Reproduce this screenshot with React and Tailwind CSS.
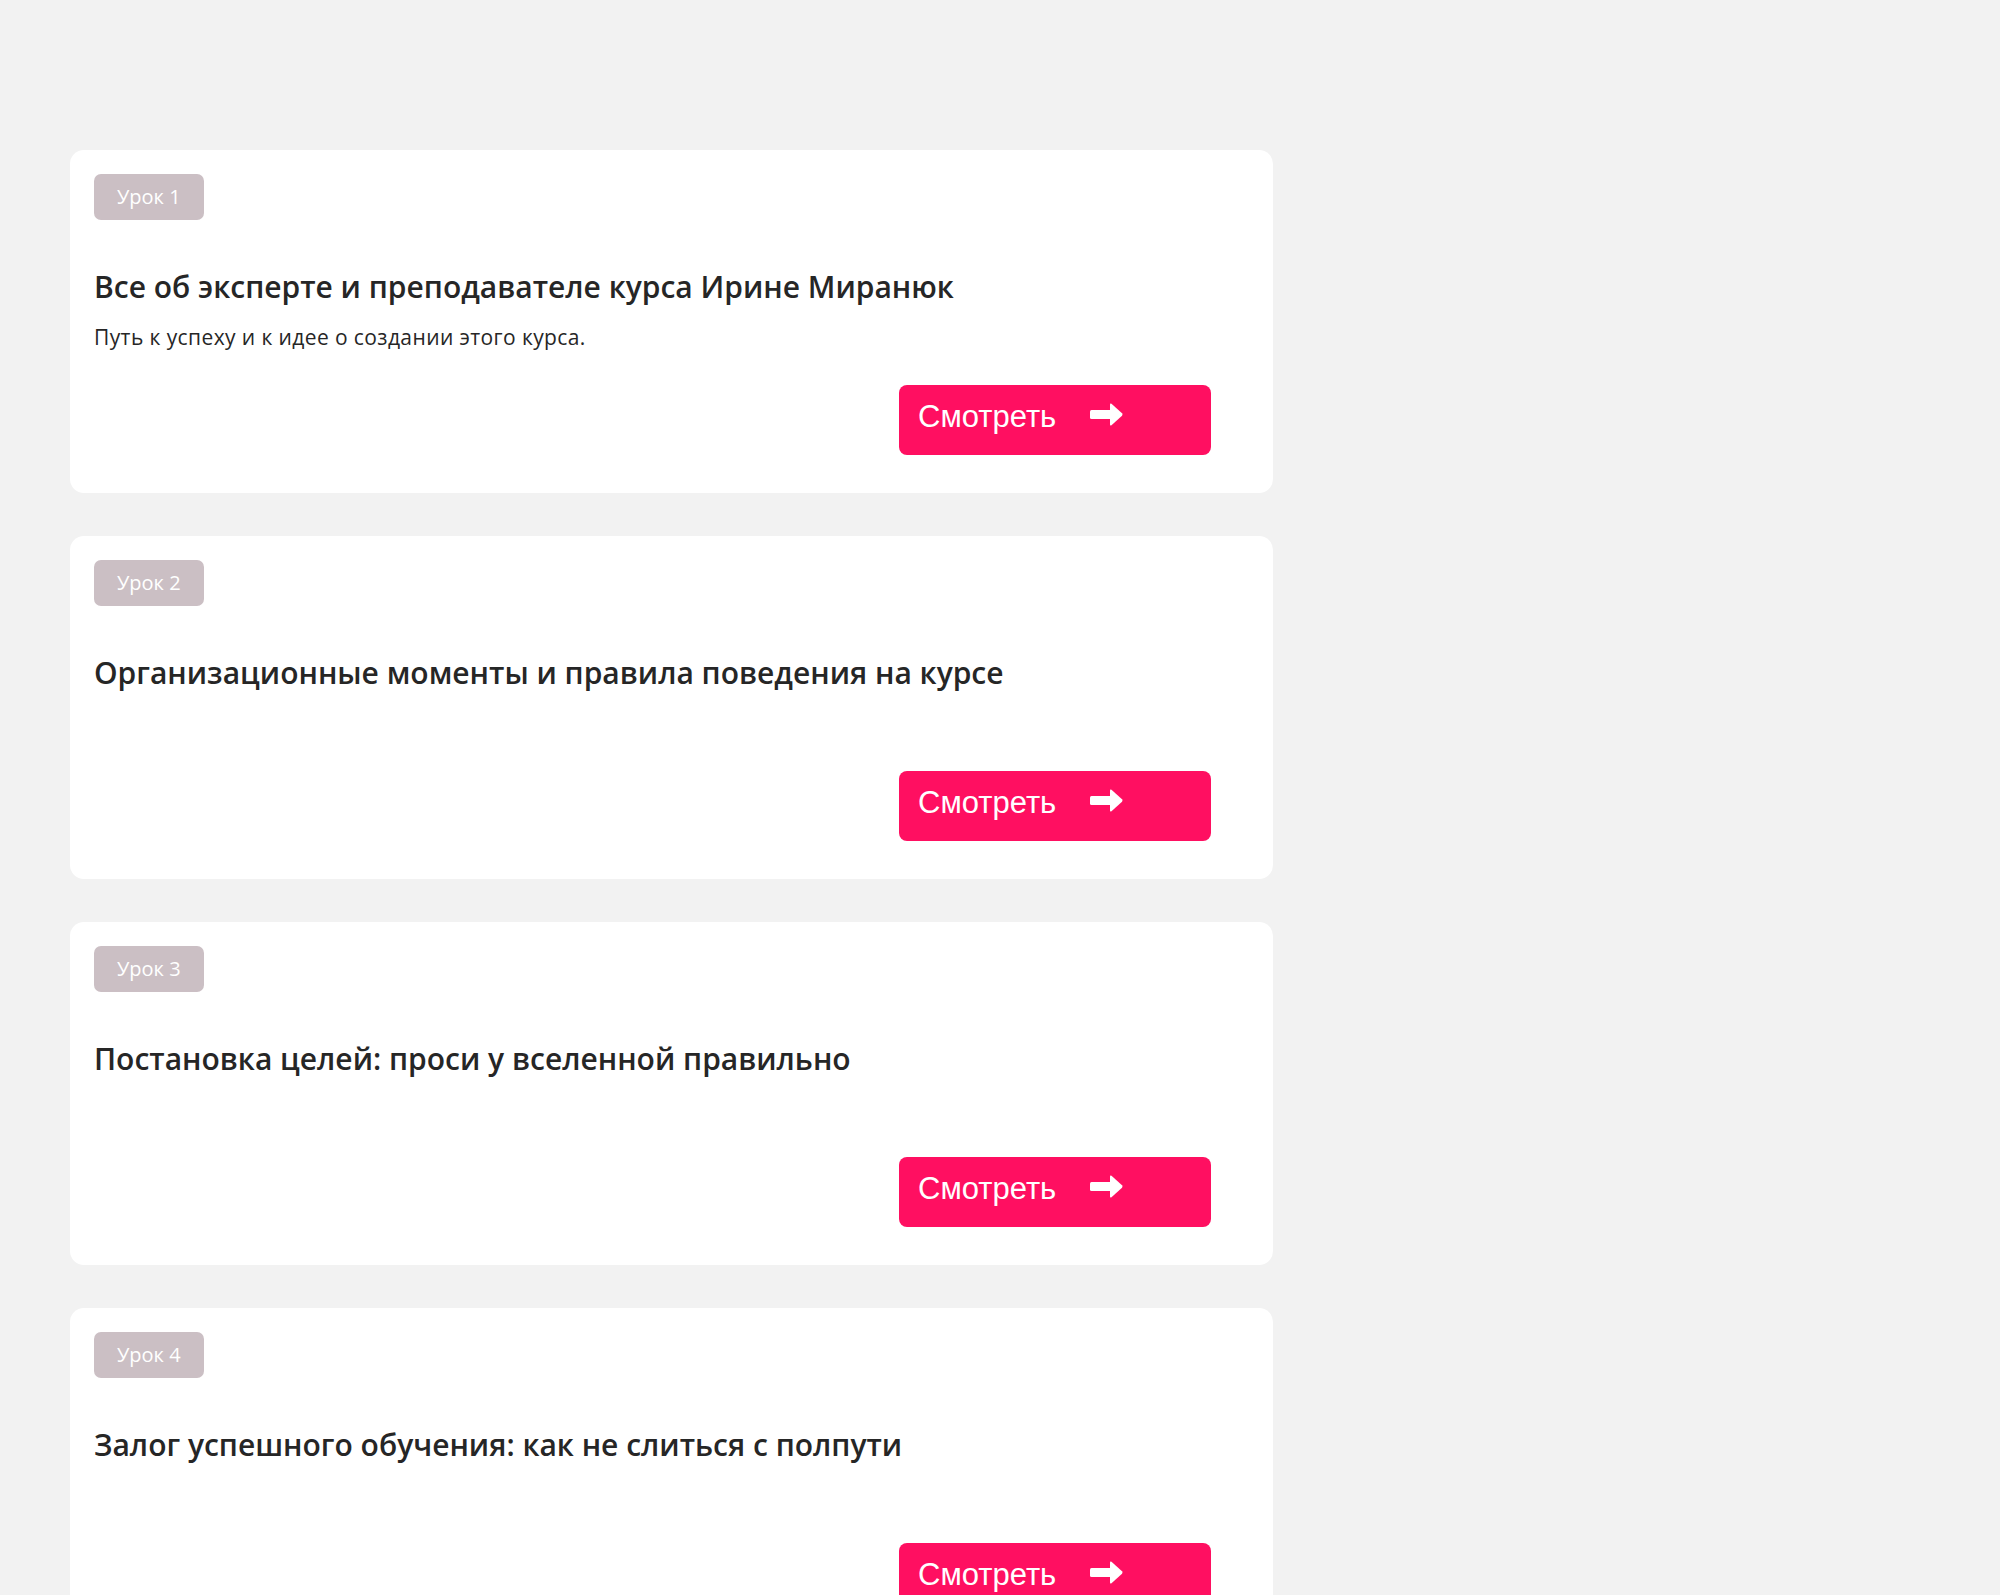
import React from 'react';

const lessons = [
  {
    id: 1,
    title: 'Все об эксперте и преподавателе курса Ирине Миранюк',
    description: 'Путь к успеху и к идее о создании этого курса.',
  },
  { id: 2, title: 'Организационные моменты и правила поведения на курсе', description: '' },
  { id: 3, title: 'Постановка целей: проси у вселенной правильно', description: '' },
  { id: 4, title: 'Залог успешного обучения: как не слиться с полпути', description: '' },
];

const ArrowRight = () => (
  <svg width="33" height="23" viewBox="0 0 33 23" fill="white">
    <rect x="0" y="7" width="23" height="9" rx="1.5" />
    <path d="M20 1.5 Q20 0 21.5 0.8 L32 10.3 Q33 11.5 32 12.7 L21.5 22.2 Q20 23 20 21.5 Z" />
  </svg>
);

const LessonCard = ({ lesson }) => (
  <div className="w-[1203px] bg-white rounded-[14px] pt-6 pb-[38px] px-6">
    <span className="inline-flex items-center h-[46px] px-[23px] rounded-[7px] bg-[#cbbfc4] text-white text-[20px] font-['Open_Sans',sans-serif]">
      Урок {lesson.id}
    </span>
    <h2 className="mt-[47px] text-[30px] leading-[40px] font-semibold text-[#262626] font-['Open_Sans',sans-serif]">
      {lesson.title}
    </h2>
    <p className="mt-4 min-h-[28px] text-[21px] leading-[28px] tracking-[0.4px] text-[#262626] font-['Open_Sans',sans-serif]">
      {lesson.description}
    </p>
    <div className="mt-[34px] flex justify-end pr-[38px]">
      <button className="w-[312px] h-[70px] rounded-[8px] bg-[#ff0f61] flex items-center pl-[19px] pb-[6px] text-white text-[31px] font-['Liberation_Sans',Arial,sans-serif]">
        <span>Смотреть</span>
        <span className="ml-[34px] mb-[5px] flex items-center">
          <ArrowRight />
        </span>
      </button>
    </div>
  </div>
);

export default function App() {
  return (
    <div className="min-h-screen bg-[#f2f2f2] pt-[150px] pl-[70px]">
      <div className="flex flex-col gap-[43px]">
        {lessons.map((lesson) => (
          <LessonCard key={lesson.id} lesson={lesson} />
        ))}
      </div>
    </div>
  );
}
